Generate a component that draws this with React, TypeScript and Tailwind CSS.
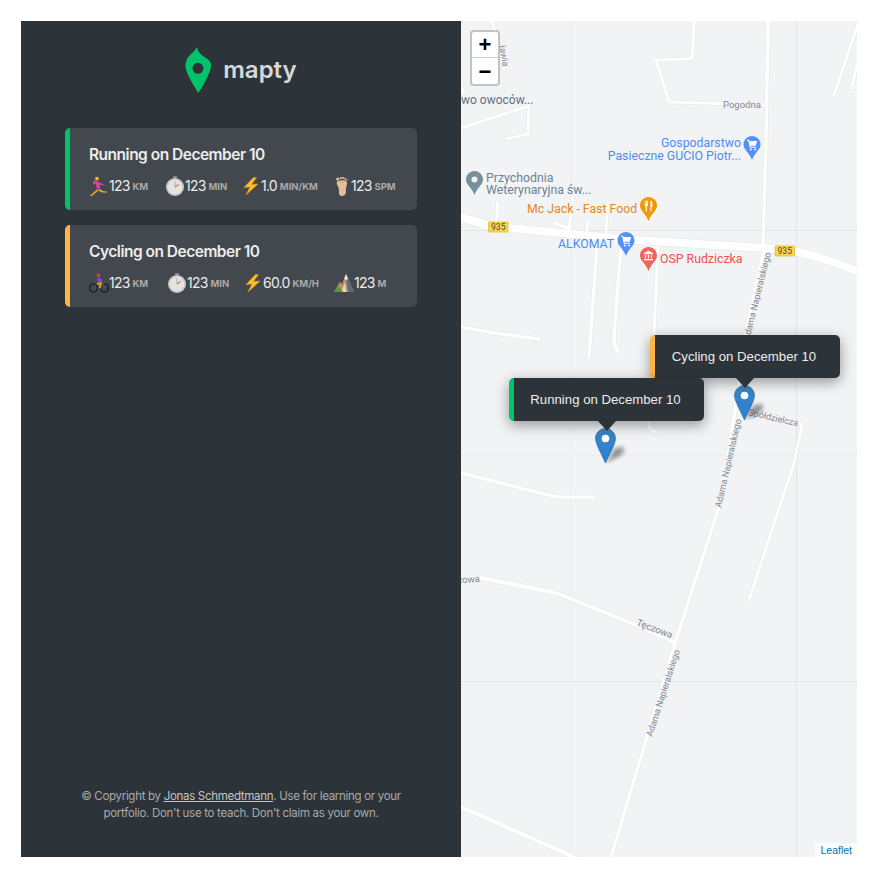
import type { ReactNode } from "react"

const sans = "font-['Inter','Liberation_Sans',sans-serif]"

// map geometry, in page coordinates (the svg viewBox starts at the map's corner)
const roads: { d: string; w: number }[] = [
  { d: "M461 217 L490 226 L508 228 L634 240 L764 248 L798 252 Q825 258 857 271", w: 8 },
  { d: "M768 21 L766 141 L763 247", w: 3.5 },
  { d: "M492 21 L495 32 L504 69", w: 3 },
  { d: "M694 21 L692.5 56 Q692 59 688 59 L656 60 L669 102 L764 105", w: 3 },
  { d: "M859 21 L834 95", w: 3 },
  { d: "M857 64 L851.7 88", w: 3 },
  { d: "M461 128 L529 106 L528 134 L507 139", w: 3 },
  { d: "M461 87 L463 92", w: 4 },
  { d: "M497.6 202 L496.6 222", w: 3 },
  { d: "M572.6 197 L569 230", w: 3 },
  { d: "M554 223 L568 228", w: 3 },
  { d: "M587.6 222 L587 232", w: 3 },
  { d: "M607.7 202 L606 232", w: 3 },
  { d: "M597 245 L589 357", w: 3.5 },
  { d: "M621 245 L614 337 Q614 347 618 352", w: 3.5 },
  { d: "M658 247 L654 335 L649 425 Q650 432 656 432", w: 3 },
  { d: "M461 327 L494 333 L539 339", w: 3.5 },
  { d: "M764 250 L745 335 L737 400 L718 510 L676 640 L611 857", w: 3.5 },
  { d: "M748 412 L798 423 Q803 425 801 430 L794 463 L749 600", w: 3 },
  { d: "M461 473 L556 497 L593 497", w: 3.5 },
  { d: "M481 578 L556 593 L636 625 L674 642", w: 4 },
  { d: "M461 807 L574 857", w: 4 },
]

function CartGlyph() {
  return (
    <g fill="#fff">
      <path d="M3.6 3.8h1.9l.5 1.3h7.6l-1.3 4.6H6.9l.3 1h5.4v1.1H6.3L4.8 4.9H3.6z" />
      <circle cx="7.4" cy="13.4" r="1" />
      <circle cx="11.6" cy="13.4" r="1" />
    </g>
  )
}

function ForkGlyph() {
  return (
    <g fill="#fff">
      <path d="M4.7 3.5h.7v3h.6v-3h.7v3h.6v-3h.7v4.4q0 1-1 1.3v5.3H5.7V9.2q-1-.3-1-1.3z" />
      <path d="M10.4 3.5q2 .6 2 4v2.7h-1v4.3h-1z" />
    </g>
  )
}

function BankGlyph() {
  return (
    <g fill="#fff">
      <path d="M8.5 3.6l4.6 2.6v1H3.900v-1z" />
      <path d="M4.900 8h1.200v3.200H4.900zM7.900 8h1.200v3.200H7.900zM10.900 8h1.200v3.200h-1.200zM3.900 11.900h9.200v1.300H3.900z" />
    </g>
  )
}

function Poi({ x, y, color, children }: { x: number; y: number; color: string; children?: ReactNode }) {
  return (
    <g transform={`translate(${x} ${y})`}>
      <path d="M8.500 0C3.800 0 0 3.800 0 8.500 0 14 6 16.500 8.500 24 11 16.500 17 14 17 8.500 17 3.800 13.200 0 8.500 0Z" fill={color} />
      {children}
    </g>
  )
}

function RoadBadge({ x, y }: { x: number; y: number }) {
  return (
    <g>
      <rect x={x} y={y} width="19.500" height="10" rx="1" fill="#fbd54a" stroke="#e3b93a" strokeWidth="0.8" />
      <text x={x + 9.75} y={y + 8} textAnchor="middle" className="fill-[#4a4a3a] font-['Roboto'] text-[8.500px]">
        935
      </text>
    </g>
  )
}

function MapTiles() {
  const halo = "[paint-order:stroke] stroke-[#f2f3f5] stroke-[2px] font-['Roboto']"
  const street = `fill-[#85898e] text-[9px] ${halo}`
  const poi = `text-[12.300px] ${halo}`
  return (
    <svg viewBox="461 21 396 836" className="h-full w-full">
      <path d="M570.500 21V857" stroke="#eaecee" strokeWidth="1" />
      <path d="M796.500 21V857M461 230.500H857M461 681.500H857" stroke="#e3e5e8" strokeWidth="1" />
      <path d="M461 455.500H857" stroke="#ebedef" strokeWidth="1" />
      {roads.map((r, i) => (
        <path key={"c" + i} d={r.d} fill="none" stroke="#e4e6e8" strokeWidth={r.w + 1} strokeLinejoin="round" strokeLinecap="round" />
      ))}
      {roads.map((r, i) => (
        <path key={"r" + i} d={r.d} fill="none" stroke="#fff" strokeWidth={r.w} strokeLinejoin="round" strokeLinecap="round" />
      ))}

      <RoadBadge x={488.500} y={222} />
      <RoadBadge x={775} y={246} />

      <text x="723" y="108" className={`fill-[#85898e] text-[9.500px] ${halo}`}>Pogodna</text>
      <text transform="translate(499 46) rotate(79)" className={street}>ławia</text>
      <text transform="translate(749 341) rotate(-76)" className={street}>Adama Napieralskiego</text>
      <text transform="translate(721 508) rotate(-77)" className={street}>Adama Napieralskiego</text>
      <text transform="translate(652 737) rotate(-72)" className={street}>Adama Napieralskiego</text>
      <text transform="translate(748 415) rotate(13)" className={street}>Spółdzielcza</text>
      <text transform="translate(636 625) rotate(21)" className={`fill-[#85898e] text-[9.500px] ${halo}`}>Tęczowa</text>
      <text transform="translate(480 582) rotate(-3)" textAnchor="end" className={`fill-[#85898e] text-[9.500px] ${halo}`}>Tęczowa</text>

      <text x="461" y="104" className={`fill-[#5f7085] text-[12px] ${halo}`}>wo owoców...</text>

      <text x="741" y="147" textAnchor="end" className={`fill-[#4d8df5] ${poi}`}>Gospodarstwo</text>
      <text x="741" y="159.500" textAnchor="end" className={`fill-[#4d8df5] ${poi}`}>Pasieczne GUCIO Piotr...</text>
      <text x="486" y="181.500" className={`fill-[#6b8296] ${poi}`}>Przychodnia</text>
      <text x="486" y="194" className={`fill-[#6b8296] ${poi}`}>Weterynaryjna św...</text>
      <text x="527" y="213" className={`fill-[#e8871e] ${poi}`}>Mc Jack - Fast Food</text>
      <text x="558" y="248" className={`fill-[#4d8df5] ${poi}`}>ALKOMAT</text>
      <text x="660" y="263" className={`fill-[#e8534a] ${poi}`}>OSP Rudziczka</text>

      <Poi x={743.500} y={136} color="#5491f5"><CartGlyph /></Poi>
      <Poi x={617.500} y={232} color="#5491f5"><CartGlyph /></Poi>
      <Poi x={640} y={197} color="#f29900"><ForkGlyph /></Poi>
      <Poi x={640} y={247} color="#ee675c"><BankGlyph /></Poi>
      <Poi x={466} y={171} color="#78909c">
        <circle cx="8.500" cy="8.500" r="3" fill="#f2f3f5" />
      </Poi>
    </svg>
  )
}

function Marker({ className, id }: { className: string; id: string }) {
  return (
    <svg viewBox="0 0 44 36" className={`absolute h-[36px] w-[44px] ${className}`}>
      <defs>
        <linearGradient id={id} x1="0" y1="0" x2="0" y2="1">
          <stop offset="0" stopColor="#3a85c0" />
          <stop offset="1" stopColor="#2a80d8" />
        </linearGradient>
        <filter id={id + "b"} x="-50%" y="-50%" width="200%" height="200%">
          <feGaussianBlur stdDeviation="2.200" />
        </filter>
      </defs>
      <path d="M11 35 L20 20 L28 19 Q31 23 25 28 Z" fill="#000" opacity="0.4" filter={`url(#${id}b)`} />
      <path
        d="M10.500 .5C4.900 .5.500 5 .500 10.500.500 16 7.500 28 10.500 35 13.500 28 20.500 16 20.500 10.500 20.500 5 16.100 .5 10.500 .5Z"
        fill={`url(#${id})`}
        stroke="#2e6f9f"
        strokeWidth="0.700"
      />
      <circle cx="10.500" cy="10.500" r="3.800" fill="#fff" />
    </svg>
  )
}

function Popup({ text, className, border }: { text: string; className: string; border: string }) {
  return (
    <div className={`absolute flex flex-col items-center ${className}`}>
      <div
        className={`flex h-[43px] w-full items-center justify-center rounded-[5px] border-l-[5px] bg-[#2d3439] pt-px pr-[7px] font-['Liberation_Sans',sans-serif] text-[13.200px] text-[#ececec] shadow-[0_4px_14px_rgba(0,0,0,0.4)] ${border}`}
      >
        {text}
      </div>
      <div className="h-0 w-0 border-x-[9px] border-t-[10px] border-x-transparent border-t-[#2d3439]" />
    </div>
  )
}

function Runner() {
  return (
    <svg viewBox="0 0 20 20" className="h-[20px] w-[20px] shrink-0">
      <circle cx="8" cy="2.600" r="1.900" fill="#f7b733" />
      <path d="M5 4.500Q7 4 10 6.500L15 8.500 14.600 9.500 10.500 8.500 11.200 12 7.500 12 7 7.500 4.500 8.500 3.800 7.500z" fill="#e8409a" />
      <path d="M7.500 11.500L11.200 11.500 11.500 13 8 14z" fill="#7a4fc0" />
      <path d="M8 13.500L5 16 2.500 18.500 1.800 19.500 3 19.800 6 17.500 9.500 14.500z" fill="#eda51f" />
      <path d="M10.500 13L14 15 16.500 15.500 16.500 16.500 13 16.500 9 14.500z" fill="#eda51f" />
      <path d="M1.500 19l1.200 1" stroke="#eee" strokeWidth="1" />
      <path d="M17 15v2.200" stroke="#bbb" strokeWidth="1" />
    </svg>
  )
}

function Stopwatch() {
  return (
    <svg viewBox="0 0 20 20" className="h-[20px] w-[20px] shrink-0">
      <rect x="8" y="0" width="4" height="2" rx=".5" fill="#8a8d90" />
      <rect x="9.300" y="1.500" width="1.400" height="2" fill="#8a8d90" />
      <circle cx="10" cy="11" r="9" fill="#c9cbcd" />
      <circle cx="10" cy="11" r="7.200" fill="#e6e4de" />
      <path d="M10 5.500V11L13.500 9" fill="none" stroke="#9a9a9a" strokeWidth="0.800" />
      <path d="M10 11L14 8" stroke="#d0433a" strokeWidth="0.700" />
    </svg>
  )
}

function Bolt() {
  return (
    <svg viewBox="0 0 20 20" className="h-[20px] w-[20px] shrink-0">
      <path d="M12.500 1.500L3 11.500 9 11 5 19 17 8 10.500 8.500 15.500 1.500z" fill="#fbc02d" stroke="#ef8f10" strokeWidth="0.600" strokeLinejoin="round" />
    </svg>
  )
}

function Foot() {
  return (
    <svg viewBox="3 0 16 20" className="h-[20px] w-[16px] shrink-0">
      <path d="M5 5.500Q9.500 3.500 13.500 4.500 16 6.500 14.500 10 13.500 13 14 16 13.500 20 9.500 20 6.500 19.500 7 15.500 7.300 12 5.500 9.500 4 7 5 5.500z" fill="#e6be96" />
      <path d="M7 6Q10 7 13 6" stroke="#c79568" strokeWidth="0.500" fill="none" />
      <circle cx="5.800" cy="3" r="1.600" fill="#ecc9a6" />
      <circle cx="8.800" cy="2" r="1.100" fill="#ecc9a6" />
      <circle cx="11" cy="2" r="1" fill="#ecc9a6" />
      <circle cx="13" cy="2.600" r=".9" fill="#ecc9a6" />
      <circle cx="14.700" cy="3.800" r=".8" fill="#ecc9a6" />
    </svg>
  )
}

function Cyclist() {
  return (
    <svg viewBox="0 0 20 20" className="h-[20px] w-[20px] shrink-0">
      <circle cx="4.500" cy="15" r="4" fill="none" stroke="#16181a" strokeWidth="1.200" />
      <circle cx="15.500" cy="15" r="4" fill="none" stroke="#16181a" strokeWidth="1.200" />
      <path d="M4.500 15L8 10 14 10 15.500 15M8 10L10 15 14 10" fill="none" stroke="#55606a" strokeWidth="0.800" />
      <circle cx="9.500" cy="2.400" r="1.900" fill="#d1423b" />
      <path d="M8 4.500Q11.500 4 13 7L13.500 9.500 9 9.500z" fill="#8b45c4" />
      <path d="M9 9.500L13 9.500 11.500 15.500 10 15.500 10.500 11.500 7.500 11.500z" fill="#eda51f" />
    </svg>
  )
}

function Mountain() {
  return (
    <svg viewBox="0 0 20 20" className="h-[20px] w-[20px] shrink-0">
      <path d="M0 19L6 9 8 11 12 1 20 19z" fill="#b8906c" />
      <path d="M12 1L20 19 14 19 12.500 9z" fill="#56707f" />
      <path d="M10.300 5.500L12 1 14 5.500 12 7.500z" fill="#f0e8da" />
      <path d="M0 19L4.500 13 9 19z" fill="#5f9440" />
      <path d="M8 17L11 9 12.500 19 9 19z" fill="#ead3ae" />
    </svg>
  )
}

function Detail({ icon, value, unit }: { icon: ReactNode; value: string; unit: string }) {
  return (
    <div className="flex h-[20px] items-center">
      {icon}
      <span className="text-[14px] leading-[20px] tracking-[-0.8px] text-[#ececec]">{value}</span>
      <span className="mt-[2px] ml-[3px] text-[9.500px] leading-[18px] font-bold text-[#aaaaaa] uppercase">{unit}</span>
    </div>
  )
}

function Workout({ title, border, cols, children }: { title: string; border: string; cols: string; children: ReactNode }) {
  return (
    <li className={`rounded-[5px] border-l-[5px] bg-[#42484d] pt-[17px] pr-4 pb-[14px] pl-[19px] ${border}`}>
      <h2 className="text-[15.500px] leading-[20px] font-semibold tracking-[-0.5px] text-[#ececec]">{title}</h2>
      <div className={`mt-[11px] grid ${cols}`}>{children}</div>
    </li>
  )
}

export default function App() {
  return (
    <div className={`flex h-screen bg-white pt-[21px] pr-[19px] pb-[20px] pl-[21px] ${sans}`}>
      <aside className="flex w-[440px] flex-col bg-[#2d3439] px-[44px] pt-[26px] pb-[35px]">
        <div className="flex h-[46px] items-center justify-center gap-3">
          <svg viewBox="185 47 26 46" className="h-[46px] w-[26px]">
            <path
              fillRule="evenodd"
              d="M197 47Q195 51 190 55 185.500 59.500 185.500 66 185.500 73 198.300 93 211 73 211 65.500 211 60 204.500 57 198 53.500 197 47ZM198 62.800A5.500 5.500 0 1 1 198 73.800 5.500 5.500 0 1 1 198 62.800Z"
              fill="#00c46a"
            />
          </svg>
          <span className="text-[24px] leading-none font-semibold text-[#d6d9da]">mapty</span>
        </div>

        <ul className="mt-[35px] flex flex-col gap-[15px]">
          <Workout title="Running on December 10" border="border-[#00c46a]" cols="grid-cols-[76px_76px_94px_1fr]">
            <Detail icon={<Runner />} value="123" unit="km" />
            <Detail icon={<Stopwatch />} value="123" unit="min" />
            <Detail icon={<Bolt />} value="1.0" unit="min/km" />
            <Detail icon={<Foot />} value="123" unit="spm" />
          </Workout>
          <Workout title="Cycling on December 10" border="border-[#ffb545]" cols="grid-cols-[78px_76px_91px_1fr]">
            <Detail icon={<Cyclist />} value="123" unit="km" />
            <Detail icon={<Stopwatch />} value="123" unit="min" />
            <Detail icon={<Bolt />} value="60.0" unit="km/h" />
            <Detail icon={<Mountain />} value="123" unit="m" />
          </Workout>
        </ul>

        <p className="mt-auto text-center text-[11.500px] leading-[17px] tracking-[-0.3px] text-[#aaaaaa]">
          © Copyright by <a className="text-[#c4c4c4] underline">Jonas Schmedtmann</a>. Use for learning or your portfolio. Don't use to teach. Don't claim as your own.
        </p>
      </aside>

      <main className="relative flex-1 overflow-hidden bg-[#f2f3f5]">
        <MapTiles />

        <div className="absolute top-[9px] left-[9px] w-[30px] overflow-hidden rounded-[4px] border-2 border-black/20 bg-clip-padding font-['Liberation_Sans',sans-serif] text-[22px] font-bold text-black">
          <div className="flex h-[26px] items-center justify-center rounded-t-[2px] border-b border-[#cccccc] bg-white">+</div>
          <div className="flex h-[26px] items-center justify-center rounded-b-[2px] bg-white">−</div>
        </div>

        <Marker id="m1" className="top-[364px] left-[273px]" />
        <Marker id="m2" className="top-[407px] left-[134px]" />
        <Popup text="Cycling on December 10" border="border-[#ffb545]" className="top-[314px] left-[189px] w-[190px]" />
        <Popup text="Running on December 10" border="border-[#00c46a]" className="top-[357px] left-[48px] w-[195px]" />

        <div className="absolute right-0 bottom-0 bg-white/70 px-[5px] font-['Liberation_Sans',sans-serif] text-[10.500px] leading-[14px] text-[#0078a8]">Leaflet</div>
      </main>
    </div>
  )
}
